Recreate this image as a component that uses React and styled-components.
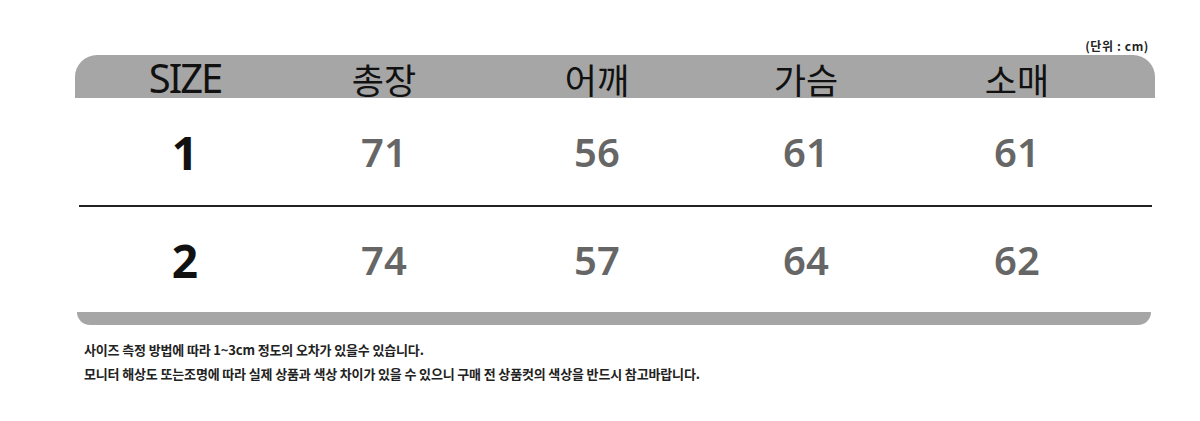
import styled, { createGlobalStyle } from "styled-components";

const GlobalStyle = createGlobalStyle`
  html, body {
    margin: 0;
    padding: 0;
    background: #ffffff;
  }
  body {
    font-family: "Noto Sans", "Noto Sans CJK KR", sans-serif;
  }
`;

const Page = styled.div`
  width: 1200px;
  height: 421px;
  padding: 36px 0 0 75px;
  box-sizing: border-box;
`;

const Chart = styled.div`
  width: 1080px;
`;

const Unit = styled.div`
  height: 19px;
  line-height: 19px;
  text-align: right;
  padding-right: 6px;
  font-family: "Noto Sans CJK KR", sans-serif;
  font-size: 12px;
  font-weight: 700;
  letter-spacing: 0.6px;
  color: #222;
`;

const cols = "220px 178px 248px 170px 252px";

const HeadRow = styled.div`
  display: grid;
  grid-template-columns: ${cols};
  height: 43px;
  align-items: center;
  background: #a6a6a6;
  border-radius: 22px 22px 0 0;
`;

const HeadCell = styled.div`
  text-align: center;
  font-family: ${(p) => (p.$latin ? '"Noto Sans"' : '"Noto Sans CJK KR"')}, sans-serif;
  font-size: ${(p) => (p.$latin ? "40px" : "35px")};
  letter-spacing: ${(p) => (p.$latin ? "-2px" : "0")};
  line-height: 43px;
  color: #111;
  padding-top: ${(p) => (p.$latin ? "0" : "2px")};
`;

const Row = styled.div`
  display: grid;
  grid-template-columns: ${cols};
  height: ${(p) => p.$h}px;
  align-items: center;
`;

const SizeCell = styled.div`
  text-align: center;
  font-family: "Noto Sans", sans-serif;
  font-size: 46px;
  font-weight: 700;
  color: #111;
  line-height: 1;
`;

const ValueCell = styled.div`
  text-align: center;
  font-family: "Noto Sans", sans-serif;
  font-size: 40px;
  font-weight: 600;
  color: #666;
  line-height: 1;
`;

const Divider = styled.div`
  height: 2px;
  margin: 0 3px 0 4px;
  background: #222;
`;

const BottomBar = styled.div`
  height: 13px;
  margin: 0 4px 0 2px;
  background: #a6a6a6;
  border-radius: 0 0 14px 14px;
`;

const Notes = styled.div`
  margin-top: 13px;
  padding-left: 9px;
  font-family: "Noto Sans CJK KR", sans-serif;
  font-size: 13px;
  font-weight: 700;
  line-height: 24px;
  color: #222;
  letter-spacing: -0.15px;
`;

const headers = ["SIZE", "총장", "어깨", "가슴", "소매"];
const rows = [
  { size: "1", values: ["71", "56", "61", "61"], h: 107 },
  { size: "2", values: ["74", "57", "64", "62"], h: 105 },
];

export default function App() {
  return (
    <Page>
      <GlobalStyle />
      <Chart>
        <Unit>(단위 : cm)</Unit>
        <HeadRow>
          {headers.map((h, i) => (
            <HeadCell key={h} $latin={i === 0}>
              {h}
            </HeadCell>
          ))}
        </HeadRow>
        {rows.map((r, i) => (
          <div key={r.size}>
            {i > 0 && <Divider />}
            <Row $h={r.h}>
              <SizeCell>{r.size}</SizeCell>
              {r.values.map((v, j) => (
                <ValueCell key={j}>{v}</ValueCell>
              ))}
            </Row>
          </div>
        ))}
        <BottomBar />
      </Chart>
      <Notes>
        <div>사이즈 측정 방법에 따라 1~3cm 정도의 오차가 있을수 있습니다.</div>
        <div>
          모니터 해상도 또는조명에 따라 실제 상품과 색상 차이가 있을 수 있으니 구매 전 상품컷의 색상을 반드시 참고바랍니다.
        </div>
      </Notes>
    </Page>
  );
}
